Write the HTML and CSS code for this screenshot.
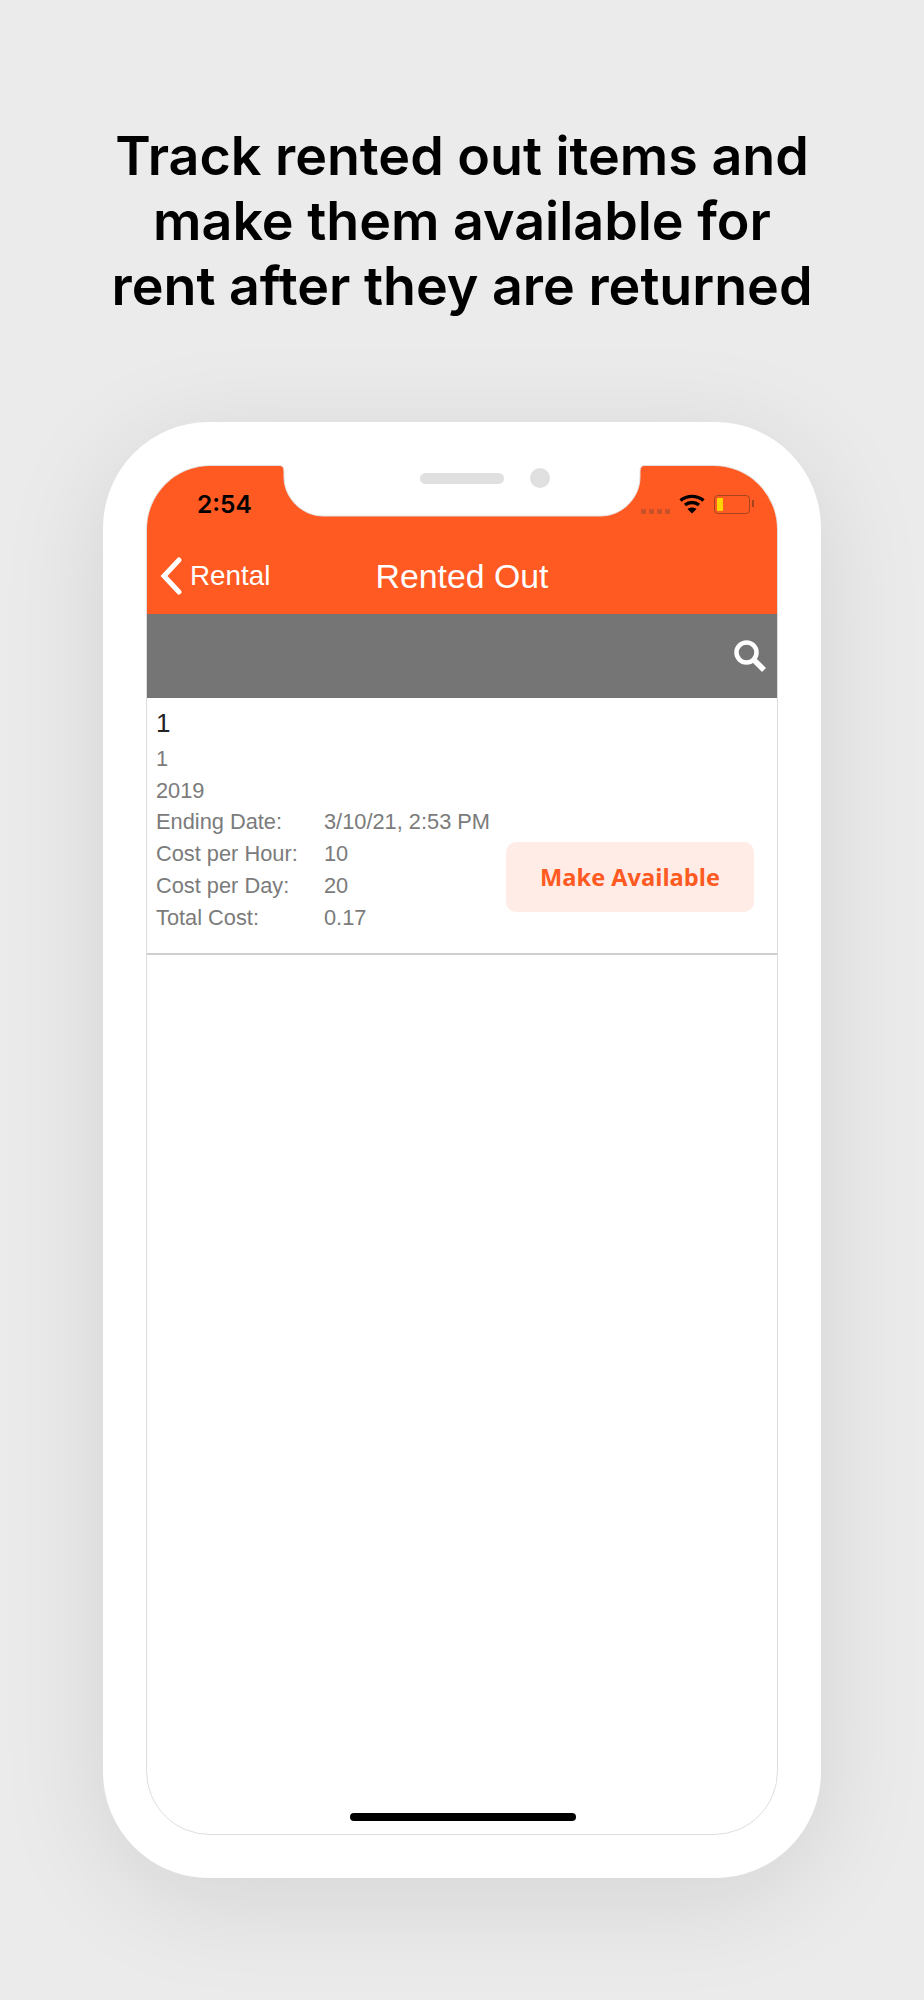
FILE: index.html
```html
<!DOCTYPE html>
<html lang="en">
<head>
    <meta charset="UTF-8">
    <meta name="viewport" content="width=device-width, initial-scale=1.0">
    <title>Rented Out</title>
    <link rel="stylesheet" href="styles.css">
</head>
<body>
    <h1 class="headline">Track rented out items and<br>make them available for<br>rent after they are returned</h1>

    <div class="phone">
        <div class="screen">
            <!-- Orange header -->
            <div class="header">
                <div class="status">
                    <span class="time">2:54</span>
                    <div class="status-icons">
                        <div class="signal"><i></i><i></i><i></i><i></i></div>
                        <svg class="wifi" width="26" height="20" viewBox="0 0 26 20">
                            <path d="M1.5 6.5C8 1 18 1 24.5 6.5" fill="none" stroke="#000" stroke-width="3.4"/>
                            <path d="M6 11C10 7.6 16 7.6 20 11" fill="none" stroke="#000" stroke-width="3.4"/>
                            <path d="M8.5 15L13 19.5L17.5 15C15 13 11 13 8.5 15Z" fill="#000"/>
                        </svg>
                        <div class="battery"><div class="battery-level"></div></div>
                    </div>
                </div>
                <div class="nav">
                    <div class="back">
                        <svg width="22" height="38" viewBox="0 0 22 38">
                            <path d="M19 3L4 19L19 35" fill="none" stroke="#fff" stroke-width="5" stroke-linecap="round" stroke-linejoin="miter"/>
                        </svg>
                        <span>Rental</span>
                    </div>
                    <div class="nav-title">Rented Out</div>
                </div>
            </div>

            <!-- Search bar -->
            <div class="searchbar">
                <svg width="34" height="34" viewBox="0 0 34 34">
                    <circle cx="13.5" cy="13.5" r="10" fill="none" stroke="#fff" stroke-width="4.5"/>
                    <path d="M21 21L31 31" fill="none" stroke="#fff" stroke-width="5.5"/>
                </svg>
            </div>

            <!-- Rented item -->
            <div class="item">
                <div class="item-info">
                    <div class="item-title">1</div>
                    <div class="row">1</div>
                    <div class="row">2019</div>
                    <div class="row"><span class="label">Ending Date:</span><span>3/10/21, 2:53 PM</span></div>
                    <div class="row"><span class="label">Cost per Hour:</span><span>10</span></div>
                    <div class="row"><span class="label">Cost per Day:</span><span>20</span></div>
                    <div class="row"><span class="label">Total Cost:</span><span>0.17</span></div>
                </div>
                <div class="make-available">Make Available</div>
            </div>

            <div class="home-bar"></div>
        </div>

        <!-- Notch lies over the top of the screen -->
        <svg class="notch" width="368" height="54" viewBox="0 0 368 54">
            <path d="M0 0Q6 0 6 6V12C6 33 24 51 45 51H323C344 51 362 33 362 12V6Q362 0 368 0Z" fill="#fff"/>
            <path d="M0 0Q6 0 6 6V12C6 33 24 51 45 51H323C344 51 362 33 362 12V6Q362 0 368 0" fill="none" stroke="#e3e3e3"/>
        </svg>
        <div class="speaker"></div>
        <div class="camera"></div>
    </div>
</body>
</html>
```

FILE: styles.css
```css
body {
    font-family: "Liberation Sans", Arial, sans-serif;
    background-color: #ebebeb;
    margin: 0;
    height: 2000px;
    overflow: hidden;
}
.headline {
    font-family: Inter, sans-serif;
    font-size: 53.8px;
    font-weight: 600;
    line-height: 65px;
    text-align: center;
    color: #000;
    margin: 0;
    padding-top: 123px;
}
.phone {
    position: relative;
    width: 718px;
    height: 1456px;
    margin: 104px auto 0;
    padding: 43px 43px 45px;
    box-sizing: border-box;
    background: #fff;
    border-radius: 106px;
    box-shadow: 0 20px 110px rgba(0, 0, 0, 0.1);
}
.screen {
    position: relative;
    height: 100%;
    background: #fff;
    border: 1px solid #dedede;
    border-radius: 64px;
    overflow: hidden;
}
.header {
    height: 148px;
    background-color: #ff5a22;
}
.status {
    height: 84px;
    display: flex;
    justify-content: space-between;
    padding: 0 27px 0 50px;
    align-items: flex-start;
}
.time {
    font-family: Inter, sans-serif;
    font-size: 24.5px;
    font-weight: 600;
    line-height: 30px;
    margin-top: 23px;
    color: #000;
}
.status-icons {
    display: flex;
    align-items: center;
    gap: 9px;
    margin-top: 28px;
}
.signal {
    display: flex;
    gap: 3px;
    align-self: flex-end;
}
.signal i {
    width: 5px;
    height: 5px;
    border-radius: 1px;
    background: #c9512a;
}
.battery {
    position: relative;
    width: 36px;
    height: 19px;
    box-sizing: border-box;
    border: 1.5px solid #a5441f;
    border-radius: 4px;
    padding: 2px;
}
.battery:after {
    content: "";
    position: absolute;
    right: -5px;
    top: 4px;
    width: 2px;
    height: 7px;
    background: #a5441f;
}
.battery-level {
    width: 6px;
    height: 100%;
    background: #ffd400;
    border-radius: 1px;
}
.nav {
    position: relative;
    height: 64px;
    display: flex;
    align-items: center;
    justify-content: center;
}
.back {
    position: absolute;
    left: 13px;
    top: 7px;
    display: flex;
    align-items: center;
    gap: 8px;
    color: #fff;
    font-size: 27.8px;
}
.nav-title {
    color: #fff;
    font-size: 33.8px;
    margin-top: -12px;
}
.searchbar {
    height: 84px;
    background-color: #757575;
    display: flex;
    align-items: center;
    justify-content: flex-end;
    padding-right: 10px;
}
.item {
    position: relative;
    height: 245px;
    border-bottom: 2px solid #cfcfcf;
    padding: 10px 23px 0 9px;
    display: flex;
    justify-content: space-between;
    align-items: flex-start;
}
.item-title {
    font-size: 26px;
    line-height: 30px;
    color: #222;
    margin-bottom: 5px;
}
.row {
    display: flex;
    font-size: 21.8px;
    line-height: 31.7px;
    color: #7b7b7b;
}
.label {
    width: 168px;
}
.make-available {
    width: 248px;
    height: 70px;
    margin-top: 134px;
    background-color: #ffece6;
    border-radius: 10px;
    color: #ff5a22;
    font-family: "Open Sans", sans-serif;
    font-size: 23.6px;
    font-weight: 700;
    line-height: 70px;
    text-align: center;
}
.notch {
    position: absolute;
    left: 175px;
    top: 43px;
}
.speaker {
    position: absolute;
    left: 317px;
    top: 51px;
    width: 84px;
    height: 11px;
    border-radius: 6px;
    background: #e0e0e0;
}
.camera {
    position: absolute;
    left: 427px;
    top: 46px;
    width: 20px;
    height: 20px;
    border-radius: 50%;
    background: #e0e0e0;
}
.home-bar {
    position: absolute;
    left: 203px;
    bottom: 13px;
    width: 226px;
    height: 8px;
    border-radius: 4px;
    background: #000;
}
```
